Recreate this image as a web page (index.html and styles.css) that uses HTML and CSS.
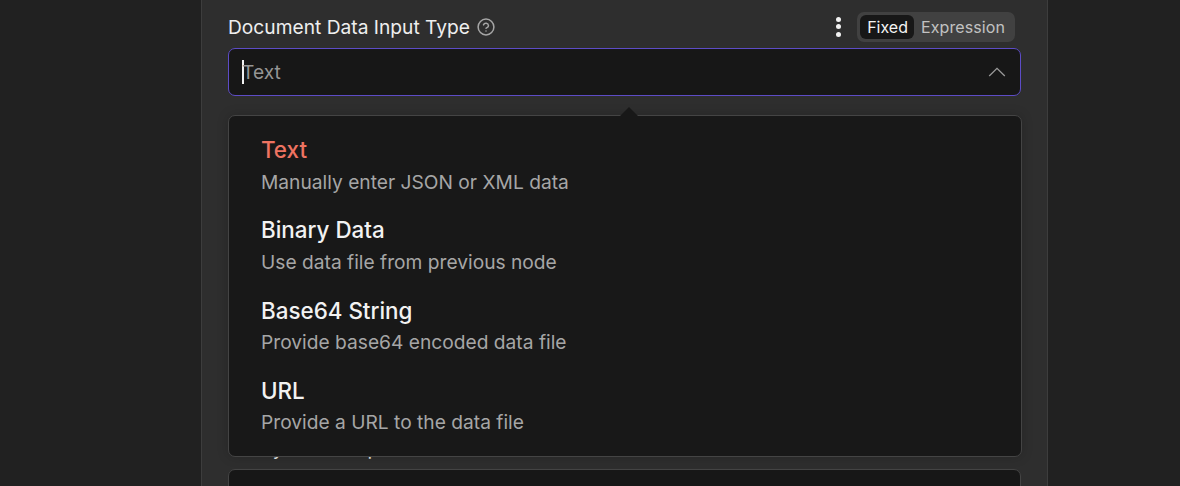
FILE: index.html
```html
<!DOCTYPE html>
<html lang="en">
<head>
<meta charset="utf-8">
<title>Document Data Input Type</title>
<link rel="stylesheet" href="styles.css">
</head>
<body>
<main class="panel">
  <section class="field">
    <div class="label-row">
      <label class="label">Document Data Input Type</label>
      <svg class="help" viewBox="0 0 18 18" width="18" height="18" fill="none" stroke="currentColor" stroke-width="1.5" stroke-linecap="round" stroke-linejoin="round"><circle cx="9" cy="9" r="7.9"/><path d="M6.5 6.9a2.6 2.6 0 0 1 5 .8c0 1.6-2.5 2.2-2.5 2.6"/><path d="M9 13h.01"/></svg>
      <div class="label-actions">
        <span class="kebab"><i></i><i></i><i></i></span>
        <div class="toggle">
          <span class="toggle-on">Fixed</span>
          <span class="toggle-off">Expression</span>
        </div>
      </div>
    </div>
    <div class="select">
      <span class="caret"></span>
      <span class="select-value">Text</span>
      <svg class="chevron" viewBox="0 0 18 10" width="18" height="10" fill="none" stroke="currentColor" stroke-width="1.3"><path d="M1.2 9 9 1.4 16.8 9"/></svg>
    </div>
  </section>

  <section class="field next-field">
    <label class="label">Query Text Shape</label>
    <div class="input-next"><span class="input-text">1</span></div>
  </section>

  <div class="popover">
    <span class="arrow"></span>
    <ul class="options">
      <li class="option selected"><div class="option-title">Text</div><div class="option-desc">Manually enter JSON or XML data</div></li>
      <li class="option"><div class="option-title">Binary Data</div><div class="option-desc">Use data file from previous node</div></li>
      <li class="option"><div class="option-title">Base64 String</div><div class="option-desc">Provide base64 encoded data file</div></li>
      <li class="option"><div class="option-title">URL</div><div class="option-desc">Provide a URL to the data file</div></li>
    </ul>
  </div>
</main>
</body>
</html>
```

FILE: styles.css
```css
* { box-sizing: border-box; }
html, body { margin: 0; height: 486px; overflow: hidden; }
body {
  background: #212121;
  font-family: Inter, "Liberation Sans", sans-serif;
  color: #f4f4f4;
}
.panel {
  position: relative;
  width: 847px;
  height: 486px;
  margin-left: 201px;
  padding: 0 26px;
  background: #2e2e2e;
  border-left: 1px solid #3d3d3d;
  border-right: 1px solid #3d3d3d;
  overflow: hidden;
}
.field { display: flex; flex-direction: column; }
.label-row {
  display: flex;
  align-items: center;
  height: 48px;
  padding-top: 8px;
  padding-bottom: 3px;
  padding-right: 6px;
}
.label { font-size: 19.2px; line-height: 24px; color: #eeeeee; }
.help { margin-left: 7px; color: #a6a6a6; }
.label-actions { margin-left: auto; display: flex; align-items: center; gap: 16px; }
.kebab { display: flex; flex-direction: column; gap: 2.5px; }
.kebab i { width: 5px; height: 5px; border-radius: 50%; background: #f2f2f2; }
.toggle {
  display: flex;
  align-items: center;
  height: 30px;
  padding: 3px;
  background: #414141;
  border-radius: 7px;
  font-size: 16px;
}
.toggle-on {
  height: 24px;
  line-height: 24px;
  padding: 0 6px 0 7px;
  background: #171717;
  border-radius: 6px;
  color: #f4f4f4;
}
.toggle-off { padding: 0 7px; letter-spacing: 0.1px; color: #c2c2c2; }
.select {
  display: flex;
  align-items: center;
  width: 793px;
  height: 48px;
  padding: 0.4px 14px 0 13px;
  background: #171717;
  border: 1px solid #5d4cc6;
  border-radius: 7px;
}
.caret { width: 2px; height: 24px; background: #f2f2f2; margin-right: -2px; }
.select-value { font-size: 19.2px; color: #959595; }
.chevron { margin-left: auto; color: #9a9a9a; }
.next-field { margin-top: 340px; }
.next-field .label { height: 24px; margin-bottom: 9px; }
.input-next {
  width: 793px;
  height: 60px;
  padding: 14px 19px;
  background: #171717;
  border: 1px solid #444;
  border-radius: 7px;
}
.input-text { font-size: 16px; line-height: 20px; color: #e8e8e8; }
.popover {
  position: absolute;
  left: 26px;
  top: 115px;
  width: 794px;
  height: 342px;
  background: #181818;
  border: 1px solid #444;
  border-radius: 7px;
  box-shadow: 0 0 12px rgba(0, 0, 0, 0.18);
}
.arrow {
  position: absolute;
  left: 391px;
  top: -9px;
  width: 0;
  height: 0;
  border-left: 9px solid transparent;
  border-right: 9px solid transparent;
  border-bottom: 9px solid #181818;
}
.options { list-style: none; margin: 0; padding: 14px 0 0; }
.option { height: 80.2px; padding: 4.2px 32px 0; }
.option-title { font-size: 22.4px; line-height: 32px; font-weight: 450; color: #f2f2f2; }
.option-desc { font-size: 19.2px; line-height: 32px; margin-top: -0.4px; color: #a6a6a6; }
.selected .option-title { color: #ee7361; }
```
